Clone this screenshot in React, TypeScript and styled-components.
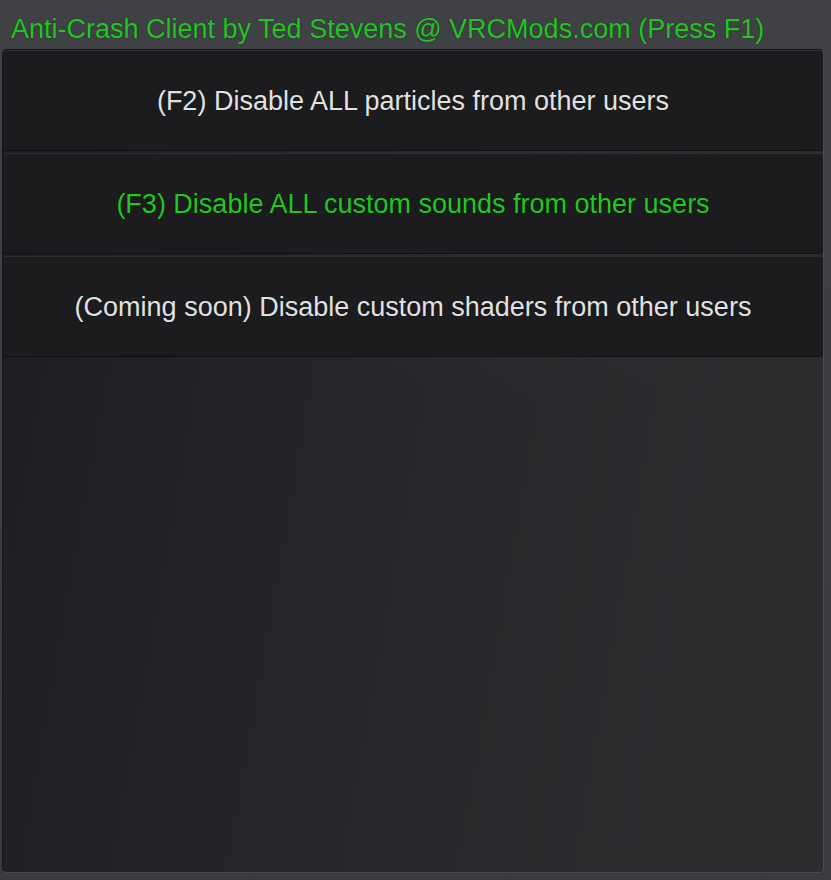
import React from "react";
import styled, { createGlobalStyle } from "styled-components";

const Global = createGlobalStyle`
  html, body { margin: 0; padding: 0; background: #3b3c40; }
  body { font-family: "Liberation Sans", Arial, sans-serif; }
`;

const Screen = styled.div`
  width: 831px;
  height: 880px;
  box-sizing: border-box;
  background: linear-gradient(180deg, #404145 0%, #3a3b3f 100%);
  display: flex;
  flex-direction: column;
  padding: 0 7px 7px 2px;
`;

const Title = styled.div`
  height: 49px;
  box-sizing: border-box;
  padding: 13px 0 0 9px;
  color: #25c425;
  font-size: 27px;
  line-height: 32px;
  white-space: nowrap;
  text-shadow: 0 0 1px rgba(0, 0, 0, 0.6);
`;

const Panel = styled.div`
  flex: 1;
  border-radius: 5px;
  border: 1px solid #151618;
  border-right-color: #4a4b50;
  border-bottom-color: #4a4b50;
  background:
    radial-gradient(ellipse 60% 40% at 65% 15%, rgba(60, 61, 64, 0.35), transparent 70%),
    linear-gradient(100deg, #1b1c1f 0%, #212225 20%, #26272a 50%, #2b2c2e 80%, #2c2d2f 100%);
  display: flex;
  flex-direction: column;
  gap: 3px;
  padding: 0;
  overflow: hidden;
`;

const Button = styled.div<{ $active?: boolean }>`
  height: 100px;
  box-sizing: border-box;
  display: flex;
  align-items: center;
  justify-content: center;
  padding-top: 2px;
  background: #1c1c1e;
  border-radius: 4px;
  border-top: 1px solid #2e2f31;
  box-shadow: 0 1px 0 #0f1011;
  color: ${(p) => (p.$active ? "#22c822" : "#e2e2e2")};
  font-size: 27px;
  white-space: nowrap;
  text-shadow: 0 0 1px rgba(0, 0, 0, 0.8);
`;

export default function App() {
  return (
    <>
      <Global />
      <Screen>
        <Title>Anti-Crash Client by Ted Stevens @ VRCMods.com (Press F1)</Title>
        <Panel>
          <Button>(F2) Disable ALL particles from other users</Button>
          <Button $active>(F3) Disable ALL custom sounds from other users</Button>
          <Button>(Coming soon) Disable custom shaders from other users</Button>
        </Panel>
      </Screen>
    </>
  );
}
